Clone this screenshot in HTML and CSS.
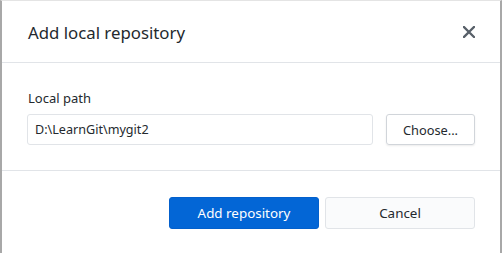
FILE: index.html
```html
<!DOCTYPE html>
<html>
<head>
<meta charset="utf-8">
<link rel="stylesheet" href="styles.css">
</head>
<body>
<div class="dialog">
  <div class="header">
    <div class="title">Add local repository</div>
    <div class="close">
      <svg width="12" height="12" viewBox="0 0 12 12"><path d="M1 1L11 11M11 1L1 11" stroke="#586069" stroke-width="2.3" stroke-linecap="square"/></svg>
    </div>
  </div>
  <div class="body">
    <div class="label">Local path</div>
    <div class="row">
      <div class="input">D:\LearnGit\mygit2</div>
      <div class="choose">Choose...</div>
    </div>
  </div>
  <div class="footer">
    <div class="btn primary">Add repository</div>
    <div class="btn secondary">Cancel</div>
  </div>
</div>
</body>
</html>
```
FILE: styles.css
```css
html, body { margin: 0; padding: 0; background: #fff; }
body { font-family: "Noto Sans", "Open Sans", sans-serif; color: #24292e; }
.dialog {
  width: 498px;
  height: 252px;
  border-top: 1px solid #e4e4e4;
  border-left: 2px solid #a8a8a8;
  border-right: 2px solid #a8a8a8;
  background: #fff;
  display: flex;
  flex-direction: column;
}
.header {
  height: 62px;
  box-sizing: border-box;
  border-bottom: 1px solid #e1e4e8;
  display: flex;
  align-items: center;
  justify-content: space-between;
  padding: 1px 25px 0 26px;
}
.title { font-size: 16.8px; color: #24292e; }
.close { width: 12px; height: 12px; display: flex; }
.body {
  height: 108px;
  box-sizing: border-box;
  border-bottom: 1px solid #e1e4e8;
  padding: 27px 25px 0 25px;
}
.label { font-size: 13px; line-height: 17px; color: #24292e; margin-bottom: 7px; padding-left: 1px; }
.row { display: flex; gap: 13px; }
.input {
  width: 346px;
  height: 31px;
  box-sizing: border-box;
  border: 1px solid #e1e4e8;
  border-radius: 3px;
  font-size: 12.6px;
  line-height: 30px;
  padding-left: 7px;
  color: #24292e;
}
.choose {
  width: 89px;
  height: 31px;
  box-sizing: border-box;
  border: 1px solid #d1d5da;
  border-radius: 3px;
  box-shadow: 0 1px 2px rgba(0,0,0,0.08);
  font-size: 12.8px;
  line-height: 30px;
  text-align: center;
  color: #24292e;
}
.footer {
  display: flex;
  justify-content: flex-end;
  gap: 6px;
  padding: 26px 25px 0 0;
}
.btn {
  width: 150px;
  height: 32px;
  box-sizing: border-box;
  border-radius: 3px;
  font-size: 13.4px;
  line-height: 30px;
  text-align: center;
}
.primary { background: #0366d6; color: #fff; border: 1px solid #0360cc; }
.secondary { background: #fafbfc; color: #24292e; border: 1px solid #e1e4e8; }
```
